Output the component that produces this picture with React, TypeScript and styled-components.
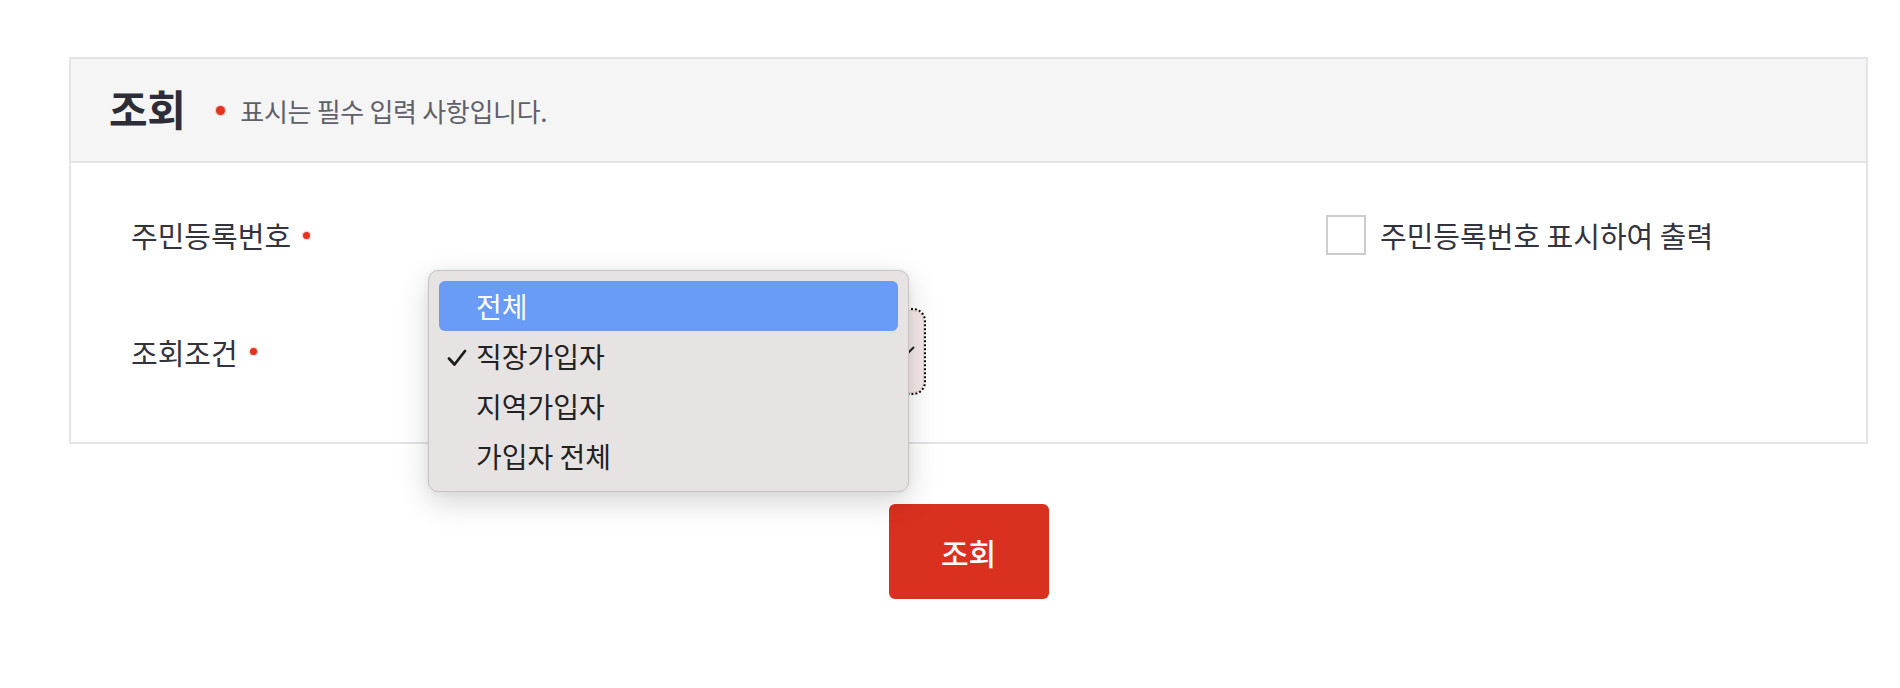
import React from 'react';
import styled, { createGlobalStyle } from 'styled-components';

const GlobalStyle = createGlobalStyle`
  body {
    margin: 0;
    background: #ffffff;
    font-family: 'Noto Sans CJK KR', 'Noto Sans', sans-serif;
    color: #33333d;
  }
`;

const Page = styled.div`
  padding: 57px 32px 40px 69px;
`;

const Panel = styled.section`
  border: 2px solid #e3e3e8;
  background: #ffffff;
`;

const Header = styled.div`
  display: flex;
  align-items: center;
  height: 102px;
  padding: 0 0 0 38px;
  background: #f5f5f5;
  border-bottom: 2px solid #e3e3e8;
`;

const Title = styled.h2`
  margin: 0 31px 6px 0;
  font-size: 42px;
  font-weight: 700;
  letter-spacing: -0.5px;
  color: #2d2d37;
`;

const Dot = styled.span<{ size?: number }>`
  display: inline-block;
  flex: none;
  width: ${(p) => p.size ?? 7}px;
  height: ${(p) => p.size ?? 7}px;
  border-radius: 50%;
  background: #e2331f;
  box-shadow: 0 0 1px 1px rgba(226, 51, 31, 0.25);
`;

const Notice = styled.span`
  margin-left: 15px;
  font-size: 26px;
  color: #60606a;
  letter-spacing: -0.3px;
`;

const Body = styled.div`
  display: flex;
  flex-direction: column;
  gap: 50px;
  padding: 47px 60px 49px 60px;
`;

const Row = styled.div`
  display: grid;
  grid-template-columns: 297px 1fr;
  align-items: center;
`;

const TopRow = styled.div`
  display: grid;
  grid-template-columns: 1195px auto;
  align-items: center;
  height: 50px;
`;

const Label = styled.div`
  display: flex;
  align-items: center;
  gap: 12px;
  font-size: 29px;
  color: #33333d;
`;

const CheckGroup = styled.label`
  display: flex;
  align-items: center;
  gap: 14px;
  font-size: 29px;
  color: #33333d;
`;

const CheckBox = styled.span`
  width: 36px;
  height: 36px;
  border: 2px solid #cccccc;
  background: #ffffff;
`;

const Field = styled.div`
  position: relative;
  width: 496px;
  height: 83px;
`;

const SelectBox = styled.div`
  box-sizing: border-box;
  height: 100%;
  margin-left: 8px;
  border: 1px solid #ecc9c9;
  border-radius: 11px;
  background: #f5e9e9;
  outline: 2px dotted #111111;
  outline-offset: 0;
  position: relative;
`;

const Chevron = styled.svg`
  position: absolute;
  right: 8px;
  top: 33px;
`;

const Menu = styled.ul`
  position: absolute;
  left: 0;
  top: -40px;
  box-sizing: border-box;
  width: 481px;
  margin: 0;
  padding: 10px;
  list-style: none;
  background: #e7e3e2;
  border: 1px solid #c7c3c2;
  border-radius: 10px;
  box-shadow: 0 10px 30px rgba(0, 0, 0, 0.17), 0 0 6px rgba(0, 0, 0, 0.06);
`;

const Item = styled.li<{ active?: boolean }>`
  position: relative;
  display: flex;
  align-items: center;
  height: 50px;
  padding-left: 37px;
  border-radius: 6px;
  font-size: 28px;
  color: ${(p) => (p.active ? '#ffffff' : '#222222')};
  background: ${(p) => (p.active ? '#689cf6' : 'transparent')};
`;

const Tick = styled.svg`
  position: absolute;
  left: 8px;
  top: 18px;
`;

const Actions = styled.div`
  display: flex;
  justify-content: center;
  margin-top: 60px;
`;

const SearchButton = styled.button`
  width: 160px;
  height: 95px;
  border: none;
  border-radius: 6px;
  background: #da3020;
  color: #ffffff;
  font-family: 'Noto Sans CJK KR', sans-serif;
  font-size: 30px;
  font-weight: 500;
  cursor: pointer;
`;

const options = ['전체', '직장가입자', '지역가입자', '가입자 전체'];

export default function App() {
  return (
    <>
      <GlobalStyle />
      <Page>
        <Panel>
          <Header>
            <Title>조회</Title>
            <Dot size={9} />
            <Notice>표시는 필수 입력 사항입니다.</Notice>
          </Header>
          <Body>
            <TopRow>
              <Label>
                주민등록번호 <Dot />
              </Label>
              <CheckGroup>
                <CheckBox />
                주민등록번호 표시하여 출력
              </CheckGroup>
            </TopRow>
            <Row>
              <Label>
                조회조건 <Dot />
              </Label>
              <Field>
                <SelectBox>
                  <Chevron width="16" height="14" viewBox="0 0 16 14">
                    <path d="M1 3 L8 10 L15 3" fill="none" stroke="#222" strokeWidth="2" />
                  </Chevron>
                </SelectBox>
                <Menu>
                  {options.map((o, i) => (
                    <Item key={o} active={i === 0}>
                      {i === 1 && (
                        <Tick width="20" height="18" viewBox="0 0 20 18">
                          <path
                            d="M2 9.5 L7.5 15.5 L18 2"
                            fill="none"
                            stroke="#1e1e1e"
                            strokeWidth="2.8"
                            strokeLinecap="round"
                            strokeLinejoin="round"
                          />
                        </Tick>
                      )}
                      {o}
                    </Item>
                  ))}
                </Menu>
              </Field>
            </Row>
          </Body>
        </Panel>
        <Actions>
          <SearchButton>조회</SearchButton>
        </Actions>
      </Page>
    </>
  );
}
